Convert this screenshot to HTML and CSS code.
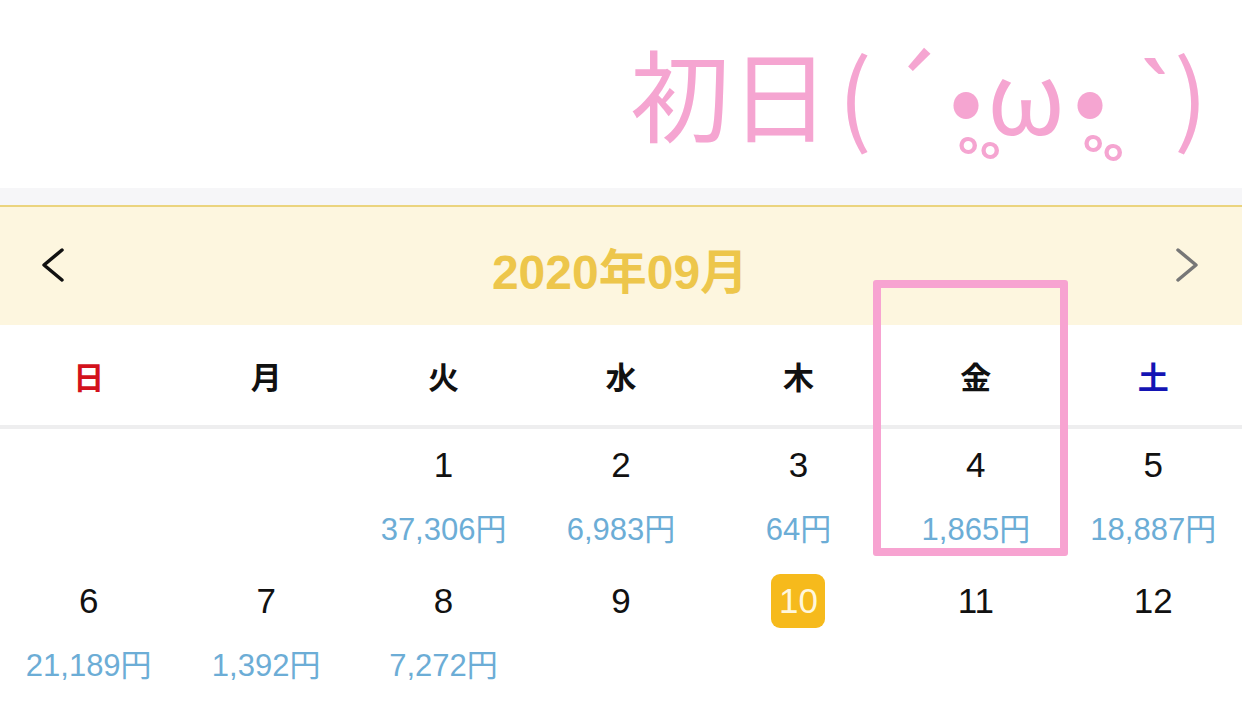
FILE: index.html
```html
<!DOCTYPE html>
<html lang="ja">
<head>
<meta charset="utf-8">
<link rel="stylesheet" href="styles.css">
</head>
<body>
<div class="page">
  <header class="title">
    <h1 class="title-text"><span class="g kanji">初日</span><span class="g paren-l">(</span><span class="g acute">´</span><span class="g eye eye-l">•</span><span class="g omega">ω</span><span class="g eye eye-r">•</span><span class="g grave">`</span><span class="g paren-r">)</span></h1>
    <span class="ring ring-a">°</span><span class="ring ring-b">°</span><span class="ring ring-c">°</span><span class="ring ring-d">°</span>
  </header>
  <div class="strip"></div>
  <div class="month">
    <svg class="chev" width="30" height="40" viewBox="0 0 30 40"><polyline points="22,4 4,19 22,34" fill="none" stroke="#111" stroke-width="3.5" stroke-linecap="round" stroke-linejoin="round"/></svg>
    <div class="month-label">2020年09月</div>
    <svg class="chev" width="30" height="40" viewBox="0 0 30 40"><polyline points="8,4 26,19 8,34" fill="none" stroke="#777" stroke-width="3.5" stroke-linecap="round" stroke-linejoin="round"/></svg>
  </div>
  <div class="weekdays">
    <div class="wd sun">日</div>
    <div class="wd">月</div>
    <div class="wd">火</div>
    <div class="wd">水</div>
    <div class="wd">木</div>
    <div class="wd">金</div>
    <div class="wd sat">土</div>
  </div>
  <div class="days">
    <div class="cell"></div>
    <div class="cell"></div>
    <div class="cell"><div class="date">1</div><div class="amt">37,306円</div></div>
    <div class="cell"><div class="date">2</div><div class="amt">6,983円</div></div>
    <div class="cell"><div class="date">3</div><div class="amt">64円</div></div>
    <div class="cell"><div class="date">4</div><div class="amt">1,865円</div></div>
    <div class="cell"><div class="date">5</div><div class="amt">18,887円</div></div>
    <div class="cell"><div class="date">6</div><div class="amt">21,189円</div></div>
    <div class="cell"><div class="date">7</div><div class="amt">1,392円</div></div>
    <div class="cell"><div class="date">8</div><div class="amt">7,272円</div></div>
    <div class="cell"><div class="date">9</div></div>
    <div class="cell"><div class="date today">10</div></div>
    <div class="cell"><div class="date">11</div></div>
    <div class="cell"><div class="date">12</div></div>
  </div>
  <div class="highlight"></div>
</div>
</body>
</html>
```
FILE: styles.css
```css
html, body {
  margin: 0;
  padding: 0;
  background: #ffffff;
}
.page {
  position: relative;
  width: 1242px;
  height: 719px;
  overflow: hidden;
  font-family: "Liberation Sans", "Noto Sans CJK JP", sans-serif;
}
.title {
  position: relative;
  height: 188px;
  display: flex;
  justify-content: flex-end;
  align-items: center;
  padding-right: 28px;
  box-sizing: border-box;
}
.title-text {
  margin: 0;
  display: flex;
  align-items: baseline;
  font-family: "Noto Sans CJK JP", sans-serif;
  font-weight: 400;
  font-size: 100px;
  line-height: 100px;
  color: #f5a5d1;
  white-space: nowrap;
}
.g {
  display: inline-flex;
  justify-content: center;
}
.kanji { width: 200px; }
.paren-l { width: 50px; }
.acute { width: 69px; }
.eye-l { width: 49px; justify-content: flex-start; }
.omega { width: 56px; }
.eye-r {
  width: 87px;
  justify-content: flex-start;
  padding-left: 19px;
  box-sizing: border-box;
}
.grave {
  width: 27px;
  font-family: "Noto Sans", sans-serif;
}
.paren-r { width: 46px; }
.ring {
  position: absolute;
  font-family: "Liberation Sans", sans-serif;
  font-weight: bold;
  font-size: 56px;
  line-height: 56px;
  width: 22px;
  text-align: center;
  color: #f5a5d1;
}
.ring-a { left: 957px; top: 129px; }
.ring-b { left: 979px; top: 134px; }
.ring-c { left: 1082px; top: 127px; }
.ring-d { left: 1102px; top: 136px; }
.strip {
  height: 17px;
  background: #f6f6f8;
}
.month {
  height: 118px;
  border-top: 2px solid #ebd47e;
  background: #fdf6df;
  display: flex;
  align-items: center;
  justify-content: space-between;
  padding: 0 42px 0 40px;
}
.chev {
  display: block;
}
.month-label {
  font-family: "Liberation Sans", "Noto Sans CJK JP", sans-serif;
  font-weight: bold;
  font-size: 48px;
  color: #edc64b;
  padding-top: 3px;
}
.weekdays {
  display: grid;
  grid-template-columns: repeat(7, 1fr);
  height: 100px;
  align-items: center;
  border-bottom: 4px solid #eeeeef;
}
.wd {
  text-align: center;
  font-family: "Noto Sans CJK JP", sans-serif;
  font-weight: bold;
  font-size: 31px;
  color: #111;
}
.wd.sun { color: #d3121c; }
.wd.sat { color: #1414b4; }
.days {
  display: grid;
  grid-template-columns: repeat(7, 1fr);
  grid-auto-rows: 136px;
}
.cell {
  display: flex;
  flex-direction: column;
  align-items: center;
  padding-top: 9px;
}
.date {
  width: 54px;
  height: 54px;
  display: flex;
  align-items: center;
  justify-content: center;
  font-size: 35px;
  color: #111;
}
.date.today {
  background: #f6ba1c;
  color: #fff7dc;
  border-radius: 9px;
}
.amt {
  margin-top: 20px;
  font-size: 31px;
  line-height: 36px;
  color: #6cadd6;
  white-space: nowrap;
}
.highlight {
  position: absolute;
  left: 873px;
  top: 280px;
  width: 195px;
  height: 276px;
  box-sizing: border-box;
  border: 8px solid #f7a3d1;
  border-radius: 3px;
}
```
